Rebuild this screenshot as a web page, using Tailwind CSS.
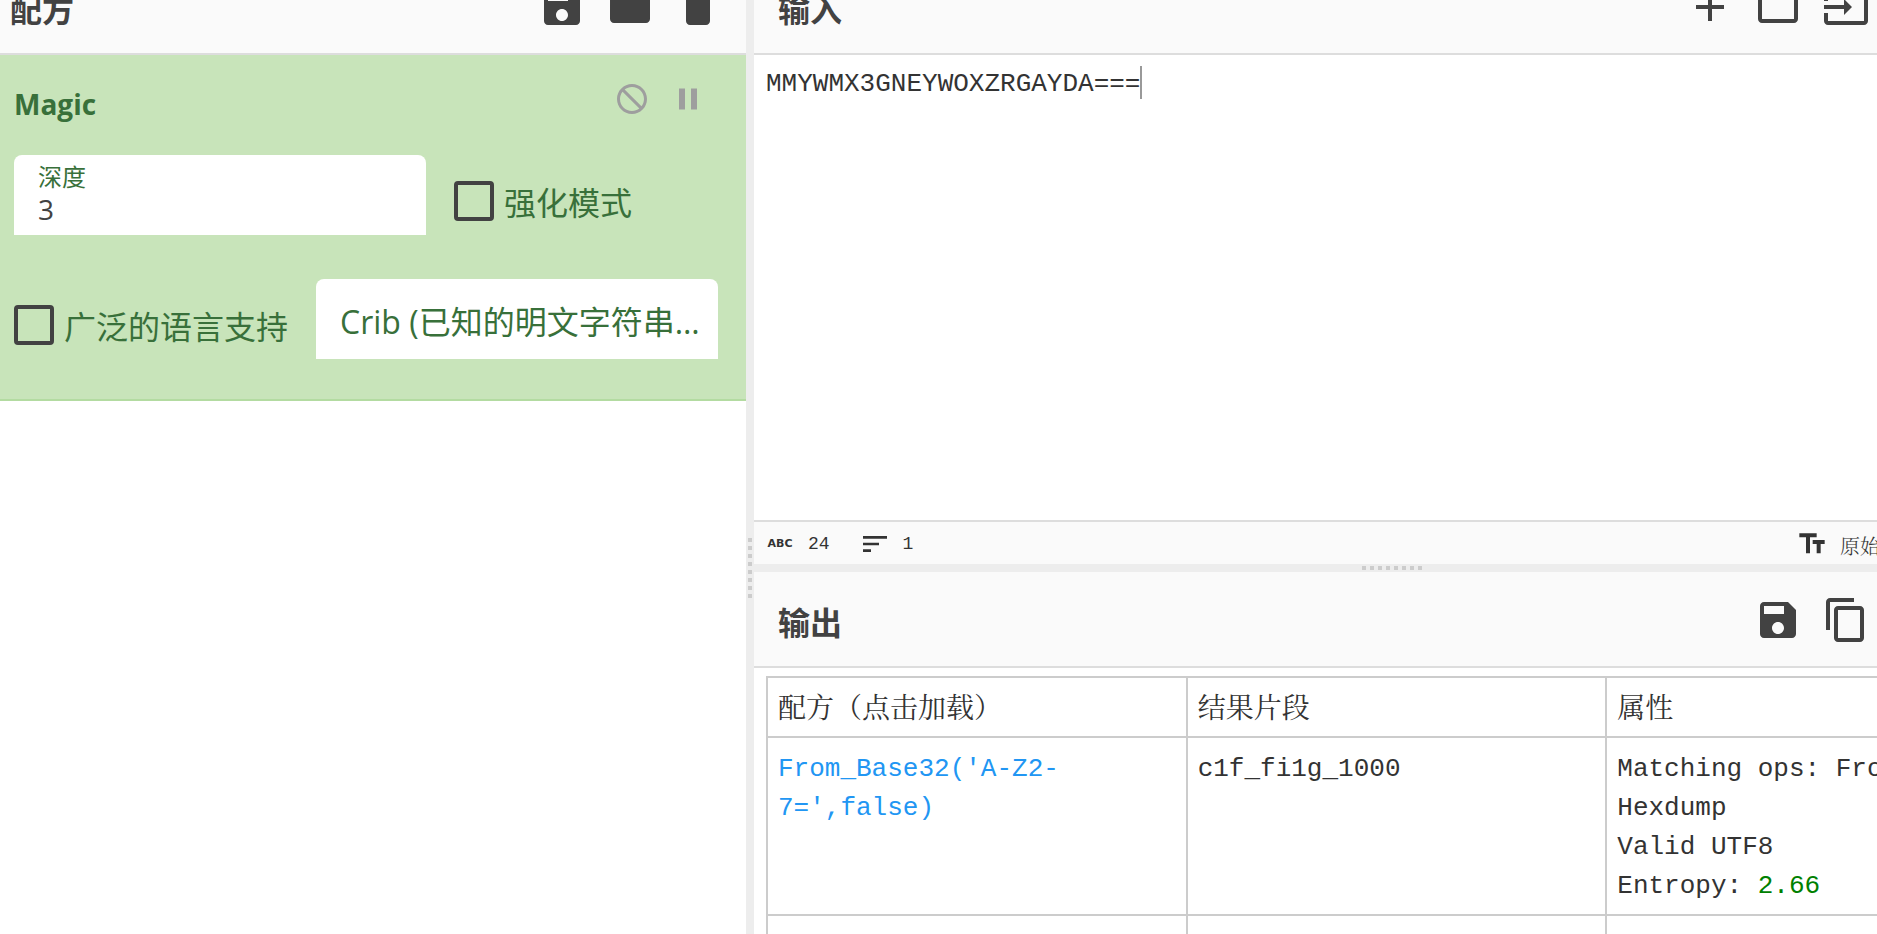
<!DOCTYPE html>
<html lang="zh-CN">
<head>
<meta charset="utf-8">
<title>CyberChef</title>
<script src="https://cdn.jsdelivr.net/npm/@tailwindcss/browser@4"></script>
</head>
<body class="h-screen overflow-hidden bg-white font-['Open_Sans','Noto_Sans_CJK_SC',sans-serif] text-[#424242]">
<main class="-mt-[41px] grid h-[calc(100vh+41px)] grid-cols-[minmax(0,746fr)_8px_minmax(0,1123fr)]">

  <section class="flex flex-col">
    <header class="flex h-24 shrink-0 items-center border-b-2 border-[#ddd] bg-[#fafafa] pt-0.5 pr-6 pl-[10px]">
      <h1 class="flex-1 pt-1.5 text-[32px] leading-12 font-bold">配方</h1>
      <div class="flex gap-5">
        <button aria-label="保存配方"><svg class="size-12 fill-current" viewBox="0 0 24 24"><path d="M17 3H5c-1.11 0-2 .9-2 2v14c0 1.1.89 2 2 2h14c1.1 0 2-.9 2-2V7l-4-4zm-5 16c-1.66 0-3-1.34-3-3s1.34-3 3-3 3 1.34 3 3-1.34 3-3 3zm3-10H5V5h10v4z"/></svg></button>
        <button aria-label="加载配方"><svg class="size-12 fill-current" viewBox="0 0 24 24"><path d="M10 4H4c-1.1 0-1.99.9-1.99 2L2 18c0 1.1.9 2 2 2h16c1.1 0 2-.9 2-2V8c0-1.1-.9-2-2-2h-8l-2-2z"/></svg></button>
        <button aria-label="清空配方"><svg class="size-12 fill-current" viewBox="0 0 24 24"><path d="M6 19c0 1.1.9 2 2 2h8c1.1 0 2-.9 2-2V7H6v12zM19 4h-3.500l-1-1h-5l-1 1H5v2h14V4z"/></svg></button>
      </div>
    </header>

    <article class="border-b-2 border-[#b3dba1] bg-[#c8e4ba] pb-10 pl-[14px] text-[#38703a]">
      <div class="flex h-[100px] items-start pt-[26px] pr-10">
        <h2 class="flex-1 pt-[3px] text-[28px] leading-10 font-bold">Magic</h2>
        <div class="flex gap-5 text-[#9e9e9e]">
          <button aria-label="禁用"><svg class="size-9 -scale-x-100 fill-current" viewBox="0 0 24 24"><path d="M12 2C6.480 2 2 6.480 2 12s4.480 10 10 10 10-4.480 10-10S17.520 2 12 2zM4 12c0-4.420 3.580-8 8-8 1.850 0 3.550.63 4.900 1.690L5.690 16.900C4.630 15.550 4 13.850 4 12zm8 8c-1.850 0-3.550-.63-4.900-1.690L18.310 7.100C19.370 8.450 20 10.150 20 12c0 4.420-3.580 8-8 8z"/></svg></button>
          <button aria-label="断点"><svg class="size-9 fill-current" viewBox="0 0 24 24"><path d="M6 19h4V5H6v14zm8-14v14h4V5h-4z"/></svg></button>
        </div>
      </div>
      <div class="flex flex-col gap-11 pr-7">
        <div class="flex h-20 items-center gap-7">
          <label class="flex h-20 w-[412px] flex-col rounded-t-lg bg-white px-6 pt-[10px]">
            <span class="text-2xl leading-6">深度</span>
            <input type="text" value="3" class="h-10 w-full text-[28px] leading-10 text-[#424242] outline-none">
          </label>
          <label class="mt-3 flex items-center gap-[10px] text-[32px] leading-10">
            <input type="checkbox" class="size-10 appearance-none rounded border-4 border-[#424242]"><span class="pt-1">强化模式</span>
          </label>
        </div>
        <div class="flex h-20 items-center gap-7">
          <label class="mt-3 flex shrink-0 items-center gap-[10px] text-[32px] leading-10">
            <input type="checkbox" class="size-10 appearance-none rounded border-4 border-[#424242]"><span class="pt-1">广泛的语言支持</span>
          </label>
          <input type="text" aria-label="Crib" placeholder="Crib (已知的明文字符串或正则表达式)" class="h-20 min-w-0 flex-1 truncate rounded-t-lg bg-white pt-1 pr-2 pl-6 text-[32px] outline-none placeholder:text-[#38703a]">
        </div>
      </div>
    </article>
  </section>

  <div class="flex flex-col items-center gap-1 bg-[#ededed] pt-[579px]">
    <i class="size-1 bg-[#ccc]"></i><i class="size-1 bg-[#ccc]"></i><i class="size-1 bg-[#ccc]"></i><i class="size-1 bg-[#ccc]"></i><i class="size-1 bg-[#ccc]"></i><i class="size-1 bg-[#ccc]"></i><i class="size-1 bg-[#ccc]"></i><i class="size-1 bg-[#ccc]"></i>
  </div>

  <div class="flex min-h-0 flex-col overflow-hidden">
    <section class="flex h-[605px] shrink-0 flex-col">
      <header class="flex h-24 shrink-0 items-center border-b-2 border-[#ddd] bg-[#fafafa] pt-0.5 pr-[7px] pl-6">
        <h1 class="flex-1 pt-1.5 text-[32px] leading-12 font-bold">输入</h1>
        <div class="flex gap-5">
          <button aria-label="新建标签"><svg class="size-12 fill-current" viewBox="0 0 24 24"><path d="M19 13h-6v6h-2v-6H5v-2h6V5h2v6h6v2z"/></svg></button>
          <button aria-label="打开文件夹"><svg class="size-12 fill-current" viewBox="0 0 24 24"><path d="M20 6h-8l-2-2H4c-1.100 0-1.990.9-1.990 2L2 18c0 1.100.9 2 2 2h16c1.100 0 2-.9 2-2V8c0-1.100-.9-2-2-2zm0 12H4V8h16v10z"/></svg></button>
          <button aria-label="打开文件"><svg class="size-12 fill-current" viewBox="0 0 24 24"><path d="M21 3.010H3c-1.100 0-2 .9-2 2V9h2V4.990h18v14.030H3V15H1v4.010c0 1.100.9 1.980 2 1.980h18c1.100 0 2-.88 2-1.980v-14c0-1.110-.9-2-2-2zM11 16l4-4-4-4v3H1v2h10v3z"/></svg></button>
        </div>
      </header>
      <div class="flex flex-1 items-start pt-[11px] pl-3">
        <input type="text" aria-label="输入" value="MMYWMX3GNEYWOXZRGAYDA===" class="field-sizing-content h-[33px] pt-1 font-['Liberation_Mono',monospace] text-[26px] text-[#333] outline-none">
        <span class="h-[33px] w-0.5 bg-[#999]"></span>
      </div>
      <footer class="flex h-11 shrink-0 items-center overflow-hidden border-t-2 border-[#ddd] bg-[#fafafa] pt-0.5 pl-[10px] font-['Liberation_Mono','Noto_Sans_CJK_SC',monospace] text-lg text-[#333]">
        <span class="w-8 text-center font-['DejaVu_Sans',sans-serif] text-[11px] font-bold">ABC</span>
        <span class="ml-3">24</span>
        <svg class="ml-[29px] size-8 fill-current" viewBox="0 0 24 24"><path d="M3 18h6v-2H3v2zM3 6v2h18V6H3zm0 7h12v-2H3v2z"/></svg>
        <span class="ml-3">1</span>
        <button class="-mr-[3px] ml-auto flex items-center gap-3 text-xl font-light whitespace-nowrap">
          <svg class="size-8 fill-current" viewBox="0 0 24 24"><path d="M2.500 4v3h5v12h3V7h5V4h-13zm19 5h-9v3h3v7h3v-7h3V9z"/></svg><span class="pt-1 font-['Noto_Serif_CJK_SC','Noto_Sans_CJK_SC',serif]">原始</span>
        </button>
      </footer>
    </section>

    <div class="flex h-2 shrink-0 items-center gap-1 bg-[#ededed] pl-[608px]">
      <i class="size-1 bg-[#ccc]"></i><i class="size-1 bg-[#ccc]"></i><i class="size-1 bg-[#ccc]"></i><i class="size-1 bg-[#ccc]"></i><i class="size-1 bg-[#ccc]"></i><i class="size-1 bg-[#ccc]"></i><i class="size-1 bg-[#ccc]"></i><i class="size-1 bg-[#ccc]"></i>
    </div>

    <section class="flex min-h-0 flex-1 flex-col">
      <header class="flex h-24 shrink-0 items-center border-b-2 border-[#ddd] bg-[#fafafa] pt-0.5 pr-[7px] pl-6">
        <h1 class="flex-1 pt-1.5 text-[32px] leading-12 font-bold">输出</h1>
        <div class="flex gap-5">
          <button aria-label="保存输出"><svg class="size-12 fill-current" viewBox="0 0 24 24"><path d="M17 3H5c-1.11 0-2 .9-2 2v14c0 1.1.89 2 2 2h14c1.1 0 2-.9 2-2V7l-4-4zm-5 16c-1.66 0-3-1.34-3-3s1.34-3 3-3 3 1.34 3 3-1.34 3-3 3zm3-10H5V5h10v4z"/></svg></button>
          <button aria-label="复制输出"><svg class="size-12 fill-current" viewBox="0 0 24 24"><path d="M16 1H4c-1.100 0-2 .9-2 2v14h2V3h12V1zm3 4H8c-1.100 0-2 .9-2 2v14c0 1.100.9 2 2 2h11c1.100 0 2-.9 2-2V7c0-1.100-.9-2-2-2zm0 16H8V7h11v14z"/></svg></button>
        </div>
      </header>
      <div class="min-h-0 flex-1 overflow-hidden pt-2 pl-3">
        <table class="w-[1261px] table-fixed border-collapse font-['Liberation_Mono','Noto_Serif_CJK_SC','Noto_Sans_CJK_SC',monospace] text-[26px] leading-[39px] text-[#333]">
          <thead>
            <tr class="text-left text-[28px] leading-[38px]">
              <th class="border-2 border-[#ccc] px-[10px] pt-[14px] pb-[6px] font-normal">配方（点击加载）</th>
              <th class="border-2 border-[#ccc] px-[10px] pt-[14px] pb-[6px] font-normal">结果片段</th>
              <th class="border-2 border-[#ccc] px-[10px] pt-[14px] pb-[6px] font-normal">属性</th>
            </tr>
          </thead>
          <tbody>
            <tr class="align-top">
              <td class="border-2 border-[#ccc] px-[10px] pt-3 pb-2"><a href="#" class="text-[#2196f3]">From_Base32('A-Z2-<br>7=',false)</a></td>
              <td class="border-2 border-[#ccc] px-[10px] pt-3 pb-2">c1f_fi1g_1000</td>
              <td class="border-2 border-[#ccc] px-[10px] pt-3 pb-2">Matching ops: From<br>Hexdump<br>Valid UTF8<br>Entropy: <span class="text-[#008000]">2.66</span></td>
            </tr>
            <tr class="h-[60px]">
              <td class="border-2 border-[#ccc]"></td>
              <td class="border-2 border-[#ccc]"></td>
              <td class="border-2 border-[#ccc]"></td>
            </tr>
          </tbody>
        </table>
      </div>
    </section>
  </div>
</main>
</body>
</html>
